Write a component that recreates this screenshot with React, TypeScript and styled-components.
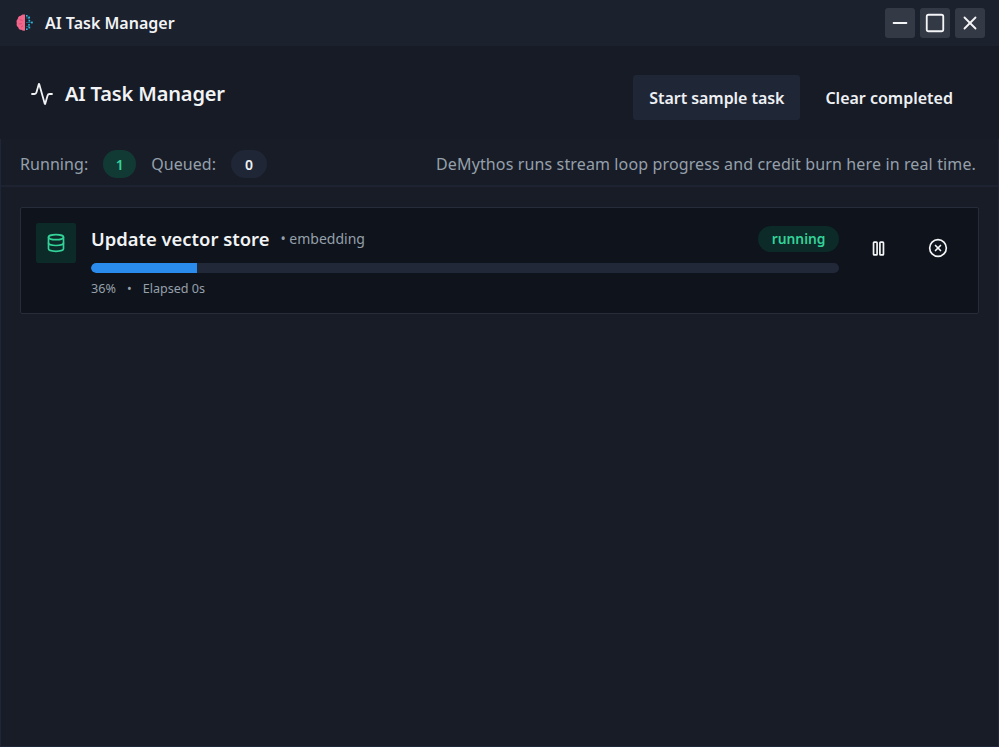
import React from "react";
import styled, { createGlobalStyle } from "styled-components";
import { Activity, CircleX, Database, Minus, Pause, Square, X } from "lucide-react";

const GlobalStyle = createGlobalStyle`
  html, body {
    margin: 0;
    height: 100%;
    background: #181c27;
  }
  * {
    box-sizing: border-box;
  }
  #root {
    height: 100%;
  }
`;

const Window = styled.div`
  display: flex;
  flex-direction: column;
  height: 747px;
  font-family: "Noto Sans", "Open Sans", sans-serif;
  background: #171b26;
  color: #f1f3f5;
`;

const TitleBar = styled.div`
  display: flex;
  flex: none;
  align-items: center;
  justify-content: space-between;
  height: 46px;
  padding: 0 14px 0 16px;
  background: #1c212e;
`;

const TitleLeft = styled.div`
  display: flex;
  align-items: center;
  gap: 11px;
`;

const TitleText = styled.span`
  font-size: 16px;
  font-weight: 600;
  line-height: 22px;
`;

const WindowButtons = styled.div`
  display: flex;
  gap: 5px;
`;

const WindowButton = styled.button`
  display: flex;
  align-items: center;
  justify-content: center;
  width: 30px;
  height: 30px;
  padding: 0;
  border: 0;
  border-radius: 3px;
  background: #343946;
  color: #f4f5f7;
`;

const Header = styled.header`
  display: flex;
  flex: none;
  align-items: center;
  justify-content: space-between;
  height: 93px;
  padding: 0 30px;
`;

const HeaderTitle = styled.div`
  display: flex;
  align-items: center;
  gap: 11px;
  margin-top: 2px;
`;

const Heading = styled.h1`
  margin: 0;
  font-size: 20px;
  font-weight: 600;
  line-height: 28px;
  letter-spacing: -0.14px;
  color: #f1f3f5;
`;

const Actions = styled.div`
  display: flex;
  align-items: center;
  gap: 10px;
  margin-top: 10px;
  margin-right: 1px;
`;

const ActionButton = styled.button<{ $filled?: boolean }>`
  height: 45px;
  padding: 0 ${(p) => (p.$filled ? "16px" : "15px")};
  border: 0;
  border-radius: 3px;
  background: ${(p) => (p.$filled ? "#1f2636" : "transparent")};
  color: #eef0f3;
  font-family: inherit;
  font-size: 16px;
  font-weight: 600;
  letter-spacing: ${(p) => (p.$filled ? "-0.06px" : "0")};
`;

const Panel = styled.div`
  flex: 1;
  border: solid #20263a;
  border-width: 0 1px 1px;
  background: #181c27;
`;

const StatusBar = styled.div`
  display: flex;
  align-items: center;
  justify-content: space-between;
  height: 48px;
  padding: 4px 22px 0 19px;
  border-bottom: 2px solid #1d2331;
  font-size: 16px;
  color: #95a0ab;
`;

const Counters = styled.div`
  display: flex;
  align-items: center;
  letter-spacing: 0.06px;
`;

const CountPill = styled.span<{ $active?: boolean }>`
  display: inline-flex;
  align-items: center;
  justify-content: center;
  height: 28px;
  min-width: ${(p) => (p.$active ? "33px" : "36px")};
  margin: 0 15px;
  border-radius: 14px;
  background: ${(p) => (p.$active ? "#123a35" : "#1f2636")};
  color: ${(p) => (p.$active ? "#34d399" : "#eef0f3")};
  font-size: 14px;
  font-weight: 600;
`;

const StatusNote = styled.span`
  letter-spacing: 0.13px;
`;

const TaskList = styled.main`
  padding: 20px 19px 0;
`;

const TaskCard = styled.section`
  display: flex;
  height: 107px;
  padding: 15px 15px 0;
  border: 1px solid #262c3a;
  border-radius: 2px;
  background: #0f131b;
`;

const TaskIcon = styled.div`
  display: flex;
  align-items: center;
  justify-content: center;
  flex: none;
  width: 40px;
  height: 40px;
  margin-right: 15px;
  border-radius: 2px;
  background: #0b2a28;
  color: #34d399;
`;

const TaskBody = styled.div`
  flex: 1;
  min-width: 0;
`;

const TaskHead = styled.div`
  display: flex;
  align-items: center;
  justify-content: space-between;
  height: 32px;
`;

const TaskName = styled.div`
  display: flex;
  align-items: center;
  gap: 11px;
  margin-top: -2px;
`;

const TaskTitle = styled.span`
  font-size: 18.4px;
  font-weight: 600;
  color: #f1f3f5;
`;

const TaskKind = styled.span`
  font-size: 14px;
  color: #95a0ab;
`;

const StatePill = styled.span`
  display: inline-flex;
  align-items: center;
  height: 26px;
  padding: 0 13.5px 1px;
  border-radius: 13px;
  background: #0b2a28;
  color: #34d399;
  font-size: 13.8px;
  font-weight: 600;
`;

const ProgressTrack = styled.div`
  height: 10px;
  margin-top: 8px;
  border-radius: 5px;
  background: #212838;
  overflow: hidden;
`;

const ProgressFill = styled.div`
  height: 100%;
  border-radius: 5px 0 0 5px;
  background: #2b8bed;
`;

const TaskMeta = styled.div`
  display: flex;
  gap: 11px;
  margin-top: 7px;
  font-size: 12.6px;
  line-height: 18px;
  color: #95a0ab;
`;

const TaskControls = styled.div`
  display: flex;
  flex: none;
  align-items: flex-start;
  gap: 20px;
  margin: 0 5px 0 19px;
`;

const IconButton = styled.button`
  display: flex;
  align-items: center;
  justify-content: center;
  width: 40px;
  height: 50px;
  padding: 0;
  border: 0;
  background: transparent;
  color: #f4f5f7;
`;

function BrainLogo() {
  return (
    <svg width="18" height="18" viewBox="0 0 18 18">
      <path
        d="M9 0.6 C7.4 0.2 5.6 0.6 4.8 1.8 C3 2 1.8 3.2 1.8 5 C0.6 6 0.2 7.6 0.8 9 C0.2 10.6 0.8 12.4 2.2 13.2 C2.4 15 4 16 5.4 15.8 C6.4 16.8 8 17 9 16.4 Z"
        fill="#f2668b"
      />
      <path d="M3.6 5.6 L6.6 6.6 M2.8 10 L6 9.6 M5 13 L7 11.8" stroke="#c9406a" strokeWidth="0.7" fill="none" />
      <path d="M10 4 H13 V7 M10 8.5 H15 M10 12.5 H13 V10.5" stroke="#1f7f9e" strokeWidth="0.7" fill="none" />
      <g fill="#2fb4dc">
        <rect x="10" y="1" width="1.6" height="1.6" />
        <rect x="12.2" y="2.6" width="1.8" height="1.8" />
        <rect x="12.6" y="6" width="1.6" height="1.6" />
        <rect x="15" y="7.6" width="1.8" height="1.8" />
        <rect x="12.2" y="10" width="1.6" height="1.6" />
        <rect x="12.4" y="12.6" width="1.8" height="1.8" />
        <rect x="10" y="14.4" width="1.6" height="1.6" />
      </g>
    </svg>
  );
}

export default function App() {
  const progress = 14.2;
  return (
    <Window>
      <GlobalStyle />
      <TitleBar>
        <TitleLeft>
          <BrainLogo />
          <TitleText>AI Task Manager</TitleText>
        </TitleLeft>
        <WindowButtons>
          <WindowButton>
            <Minus size={22} strokeWidth={2} />
          </WindowButton>
          <WindowButton>
            <Square size={22} strokeWidth={2} />
          </WindowButton>
          <WindowButton>
            <X size={22} strokeWidth={2} />
          </WindowButton>
        </WindowButtons>
      </TitleBar>
      <Header>
        <HeaderTitle>
          <Activity size={24} strokeWidth={1.8} />
          <Heading>AI Task Manager</Heading>
        </HeaderTitle>
        <Actions>
          <ActionButton $filled>Start sample task</ActionButton>
          <ActionButton>Clear completed</ActionButton>
        </Actions>
      </Header>
      <Panel>
        <StatusBar>
          <Counters>
            Running:
            <CountPill $active>1</CountPill>
            Queued:
            <CountPill>0</CountPill>
          </Counters>
          <StatusNote>DeMythos runs stream loop progress and credit burn here in real time.</StatusNote>
        </StatusBar>
        <TaskList>
          <TaskCard>
            <TaskIcon>
              <Database size={20} strokeWidth={2} />
            </TaskIcon>
            <TaskBody>
              <TaskHead>
                <TaskName>
                  <TaskTitle>Update vector store</TaskTitle>
                  <TaskKind>• embedding</TaskKind>
                </TaskName>
                <StatePill>running</StatePill>
              </TaskHead>
              <ProgressTrack>
                <ProgressFill style={{ width: `${progress}%` }} />
              </ProgressTrack>
              <TaskMeta>
                <span>36%</span>
                <span>•</span>
                <span>Elapsed 0s</span>
              </TaskMeta>
            </TaskBody>
            <TaskControls>
              <IconButton>
                <Pause size={17} strokeWidth={2.4} />
              </IconButton>
              <IconButton>
                <CircleX size={20} strokeWidth={2} />
              </IconButton>
            </TaskControls>
          </TaskCard>
        </TaskList>
      </Panel>
    </Window>
  );
}
